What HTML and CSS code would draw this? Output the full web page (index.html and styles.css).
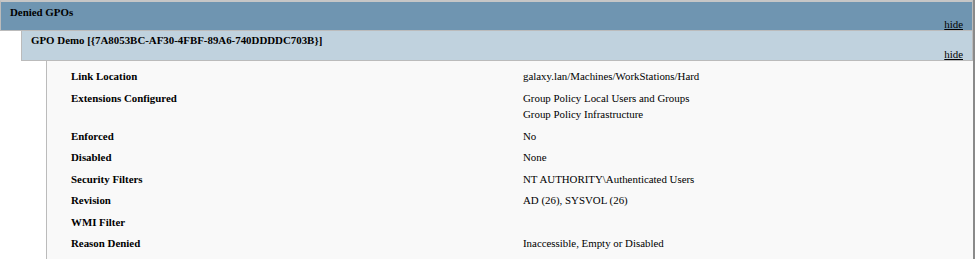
FILE: index.html
```html
<!DOCTYPE html>
<html lang="en">
<head>
    <meta charset="UTF-8">
    <title>Denied GPOs</title>
    <link rel="stylesheet" href="styles.css">
</head>
<body>
<div class="report">
    <div class="he1">
        Denied GPOs
        <a class="expando" href="#">hide</a>
    </div>
    <div class="he2">
        GPO Demo [{7A8053BC-AF30-4FBF-89A6-740DDDDC703B}]
        <a class="expando" href="#">hide</a>
    </div>
    <div class="container">
        <div class="info">
            <div class="row">
                <div class="label">Link Location</div>
                <div class="value"><div>galaxy.lan/Machines/WorkStations/Hard</div></div>
            </div>
            <div class="row">
                <div class="label">Extensions Configured</div>
                <div class="value">
                    <div>Group Policy Local Users and Groups</div>
                    <div>Group Policy Infrastructure</div>
                </div>
            </div>
            <div class="row">
                <div class="label">Enforced</div>
                <div class="value"><div>No</div></div>
            </div>
            <div class="row">
                <div class="label">Disabled</div>
                <div class="value"><div>None</div></div>
            </div>
            <div class="row">
                <div class="label">Security Filters</div>
                <div class="value"><div>NT AUTHORITY\Authenticated Users</div></div>
            </div>
            <div class="row">
                <div class="label">Revision</div>
                <div class="value"><div>AD (26), SYSVOL (26)</div></div>
            </div>
            <div class="row">
                <div class="label">WMI Filter</div>
                <div class="value"><div>&nbsp;</div></div>
            </div>
            <div class="row">
                <div class="label">Reason Denied</div>
                <div class="value"><div>Inaccessible, Empty or Disabled</div></div>
            </div>
        </div>
    </div>
</div>
</body>
</html>
```

FILE: styles.css
```css
* {
    margin: 0;
    padding: 0;
    box-sizing: border-box;
}
html, body {
    height: 100%;
}
body {
    background: #fff;
    color: #000;
    font-family: "Liberation Serif", "Times New Roman", serif;
    font-size: 10.88px;
    overflow: hidden;
}
.report {
    width: 975px;
    height: 100%;
    display: flex;
    flex-direction: column;
    border-right: 2px solid #8a8a8a;
}
/* section headers */
.he1, .he2 {
    position: relative;
    font-weight: bold;
    border: 1px solid #bbb;
    padding-left: 9px;
}
.he1 {
    height: 31px;
    border-top: 2px solid #c6c6c6;
    background: #6f95b1;
    padding-top: 4px;
}
.he2 {
    height: 31px;
    margin-top: -1px;
    margin-left: 21px;
    background: #c0d2de;
    padding-top: 3px;
}
.expando {
    position: absolute;
    right: 9px;
    bottom: 0;
    z-index: 2;
    color: #000;
    font-weight: normal;
    text-decoration: underline;
}
.container {
    flex: 1;
    margin-top: -1px;
    margin-left: 46px;
    border-left: 1px solid #bbb;
    border-top: 1px solid #bbb;
    background: #f9f9f9;
    padding-top: 5px;
}
.row {
    display: grid;
    grid-template-columns: 452px 1fr;
    padding: 4px 0 5px 24px;
    line-height: 12.5px;
}
.label {
    font-weight: bold;
}
.value {
    display: flex;
    flex-direction: column;
    gap: 4px;
}
```
